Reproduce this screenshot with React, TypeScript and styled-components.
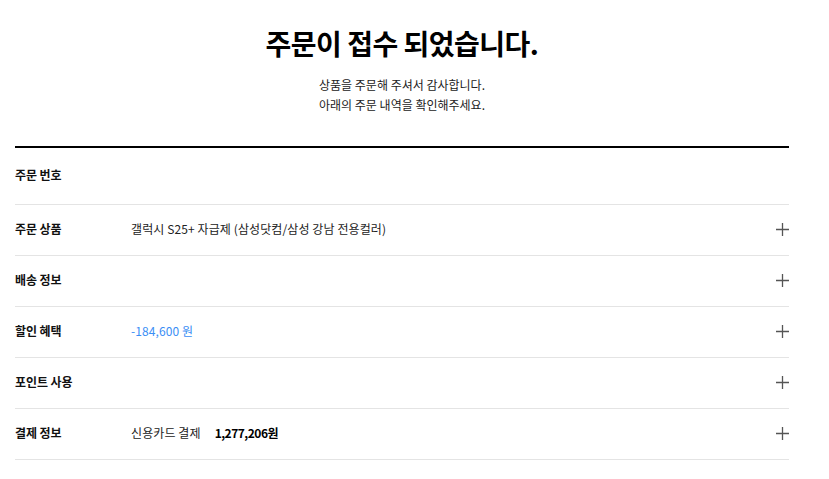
import React from "react";
import styled, { createGlobalStyle } from "styled-components";

const GlobalStyle = createGlobalStyle`
  html, body { margin: 0; padding: 0; background: #fff; }
  body {
    font-family: "Noto Sans CJK KR", "Noto Sans", sans-serif;
    color: #000;
    -webkit-font-smoothing: antialiased;
  }
`;

const Page = styled.main`
  padding: 0 40px 0 15px;
`;

const Header = styled.header`
  display: flex;
  flex-direction: column;
  align-items: center;
  padding-top: 23px;
  padding-bottom: 31px;
`;

const Title = styled.h1`
  margin: 0;
  font-size: 28px;
  line-height: 40px;
  font-weight: 700;
  letter-spacing: -0.5px;
  color: #000;
`;

const Subtitle = styled.p`
  margin: 12px 0 0;
  font-size: 12px;
  line-height: 20px;
  letter-spacing: 0;
  text-align: center;
  color: #222;
`;

const List = styled.section`
  border-top: 2px solid #000;
`;

const Row = styled.div<{ $tall?: boolean }>`
  display: flex;
  align-items: center;
  box-sizing: border-box;
  height: ${(p) => (p.$tall ? 57 : 51)}px;
  padding-bottom: 3px;
  border-bottom: 1px solid #e4e4e4;
`;

const Label = styled.div`
  width: 116px;
  flex-shrink: 0;
  font-size: 12px;
  font-weight: 700;
  letter-spacing: -0.1px;
  color: #111;
`;

const Value = styled.div<{ $tone?: "blue" }>`
  flex: 1;
  display: flex;
  align-items: center;
  gap: 14px;
  font-size: 12px;
  letter-spacing: 0.1px;
  color: ${(p) => (p.$tone === "blue" ? "#3a8ef5" : "#222")};
`;

const Amount = styled.span`
  font-weight: 700;
  color: #000;
  letter-spacing: -0.5px;
`;

const ToggleButton = styled.button`
  width: 24px;
  height: 24px;
  margin-right: -5px;
  margin-top: 2px;
  padding: 0;
  border: 0;
  background: none;
  display: flex;
  align-items: center;
  justify-content: center;
  cursor: pointer;
  color: #555;
`;

const PlusIcon = () => (
  <svg width="13" height="13" viewBox="0 0 13 13" fill="none">
    <path d="M6.5 0v13M0 6.5h13" stroke="currentColor" strokeWidth="1.3" />
  </svg>
);

type Item = { label: string; value?: React.ReactNode; tone?: "blue"; toggle: boolean };

const items: Item[] = [
  { label: "주문 번호", toggle: false },
  { label: "주문 상품", value: "갤럭시 S25+ 자급제 (삼성닷컴/삼성 강남 전용컬러)", toggle: true },
  { label: "배송 정보", toggle: true },
  { label: "할인 혜택", value: "-184,600 원", tone: "blue", toggle: true },
  { label: "포인트 사용", toggle: true },
  {
    label: "결제 정보",
    value: (
      <>
        <span>신용카드 결제</span>
        <Amount>1,277,206원</Amount>
      </>
    ),
    toggle: true,
  },
];

export default function App() {
  return (
    <>
      <GlobalStyle />
      <Page>
        <Header>
          <Title>주문이 접수 되었습니다.</Title>
          <Subtitle>
            상품을 주문해 주셔서 감사합니다.
            <br />
            아래의 주문 내역을 확인해주세요.
          </Subtitle>
        </Header>
        <List>
          {items.map((it, i) => (
            <Row key={it.label} $tall={i === 0}>
              <Label>{it.label}</Label>
              <Value $tone={it.tone}>{it.value}</Value>
              {it.toggle && (
                <ToggleButton aria-label={`${it.label} 펼치기`}>
                  <PlusIcon />
                </ToggleButton>
              )}
            </Row>
          ))}
        </List>
      </Page>
    </>
  );
}
